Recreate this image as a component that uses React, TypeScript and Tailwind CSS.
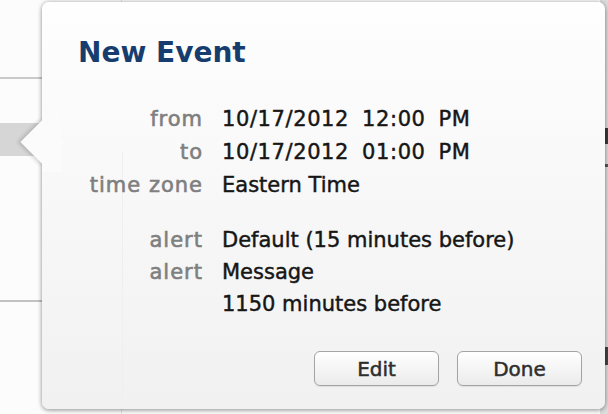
function DateValue({ date, time }: { date: string; time: string }) {
  return (
    <span className="flex gap-[13px] tracking-[0.6px]">
      <span>{date}</span>
      <span>{time}</span>
      <span>PM</span>
    </span>
  );
}

function Row({ label, children }: { label?: string; children: React.ReactNode }) {
  return (
    <div className="flex h-[33px] items-center">
      <span className="w-[144px] shrink-0 pr-[19px] text-right tracking-[1px] text-[#7f7f7f] [-webkit-text-stroke:0.6px_currentColor]">
        {label}
      </span>
      <span className="text-[#161616]">{children}</span>
    </div>
  );
}

function PopButton({ children }: { children: React.ReactNode }) {
  return (
    <button className="h-[35px] w-[125px] rounded-[6px] border border-[#a4a4a4] bg-gradient-to-b from-white to-[#ebebeb] text-[20px] text-[#2e2e2e] shadow-[0_1px_1px_rgba(0,0,0,0.08)] [-webkit-text-stroke:0.5px_currentColor]">
      {children}
    </button>
  );
}

export default function App() {
  return (
    <div
      className="relative h-[414px] w-[608px] overflow-hidden bg-[#fcfcfc]"
      style={{ fontFamily: '"DejaVu Sans", Verdana, sans-serif' }}
    >
      {/* calendar behind the popover */}
      <div className="flex h-full">
        <div className="flex w-[122px] flex-col border-r border-[#e6e6e6]">
          <div className="h-[77px]" />
          <div className="h-[2px] bg-[#c9c9c9]" />
          <div className="h-[44px]" />
          <div className="h-[33px] bg-[#d6d6d6]" />
          <div className="h-[144px]" />
          <div className="h-[2px] bg-[#c2c2c2]" />
        </div>
        <div className="flex-1" />
        <div className="flex w-[8px] flex-col bg-[#dcdcdc]">
          <div className="h-[128px]" />
          <div className="h-[16px] bg-[#3a3a3a]" />
          <div className="h-[20px]" />
          <div className="h-[3px] bg-[#555]" />
          <div className="h-[180px]" />
          <div className="h-[18px] bg-[#444]" />
        </div>
      </div>

      {/* popover */}
      <div className="absolute left-[42px] top-[2px] h-[407px] w-[563px] rounded-[7px] bg-gradient-to-b from-[#fefefe] to-[#f1f1f1] shadow-[0_0_5px_rgba(0,0,0,0.3),0_2px_4px_rgba(0,0,0,0.2)]">
        {/* arrow */}
        <div className="absolute left-[-15px] top-[124px] h-[32px] w-[32px] rotate-45 bg-[#fbfbfb] shadow-[-2px_2px_4px_rgba(0,0,0,0.16)]" />
        <div className="absolute left-0 top-[110px] h-[60px] w-[20px] bg-[#fbfbfb]" />
        {/* faint column line showing through */}
        <div className="absolute bottom-[4px] left-[80px] top-[150px] w-px bg-[#efefef]" />

        <div className="relative flex h-full flex-col pl-[36px] pr-[23px] pt-[37px]">
          <h1 className="text-[28px] font-bold leading-none text-[#173d6f]">New Event</h1>

          <div className="mt-[36px] text-[21px] leading-none [-webkit-text-stroke:0.45px_currentColor]">
            <Row label="from">
              <DateValue date="10/17/2012" time="12:00" />
            </Row>
            <Row label="to">
              <DateValue date="10/17/2012" time="01:00" />
            </Row>
            <Row label="time zone">Eastern Time</Row>
            <div className="h-[22px]" />
            <Row label="alert">Default (15 minutes before)</Row>
            <div className="-mt-px">
              <Row label="alert">Message</Row>
            </div>
            <div className="-mt-px">
              <Row>1150 minutes before</Row>
            </div>
          </div>

          <div className="mt-[30px] flex justify-end gap-[18px]">
            <PopButton>Edit</PopButton>
            <PopButton>Done</PopButton>
          </div>
        </div>
      </div>
    </div>
  );
}
